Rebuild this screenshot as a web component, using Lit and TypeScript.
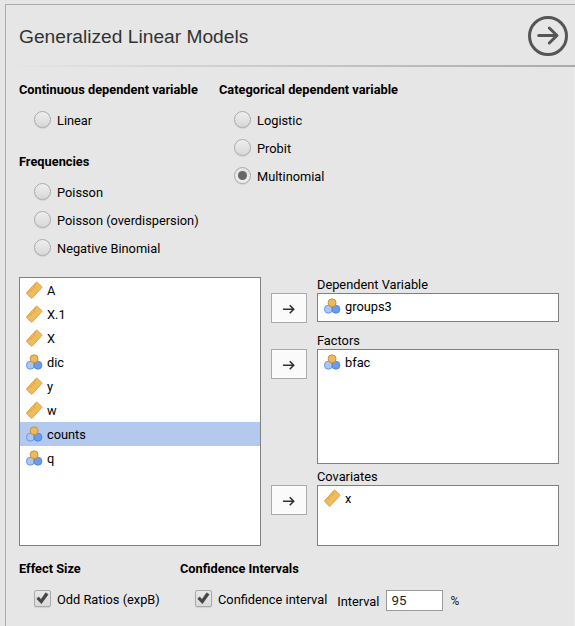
import { LitElement, html, css, svg, nothing } from "lit";
import { customElement, property, state } from "lit/decorators.js";
import { classMap } from "lit/directives/class-map.js";

type Kind = "continuous" | "nominal";
interface Variable {
  name: string;
  kind: Kind;
}

@customElement("var-icon")
class VarIcon extends LitElement {
  @property() kind: Kind = "continuous";

  static styles = css`
    :host { display: block; width: 18px; height: 18px; }
    svg { display: block; }
  `;

  render() {
    const ruler = svg`
      <g transform="translate(8.2 9.2) rotate(-48)">
        <rect x="-7.8" y="-3.9" width="15.6" height="7.8" rx="0.7" fill="#efbb5c" stroke="#e3a640" stroke-width="0.9"/>
        <path d="M-5.2 -4v1.8M-2.6 -4v2.8M0 -4v1.8M2.6 -4v2.8M5.2 -4v1.8" stroke="#c8872a" stroke-width="0.7" fill="none"/>
      </g>`;
    const circles = svg`
      <circle cx="4.4" cy="12.2" r="4" fill="#a9c6f5" stroke="#5e92e4" stroke-width="0.9"/>
      <circle cx="11.9" cy="12.2" r="4" fill="#699bee" stroke="#4a83de" stroke-width="0.9"/>
      <circle cx="8.1" cy="5.8" r="4" fill="#edb95b" stroke="#c8913a" stroke-width="1"/>`;
    return html`<svg width="18" height="18" viewBox="0 0 18 18">
      ${this.kind === "continuous" ? ruler : circles}
    </svg>`;
  }
}

@customElement("choice-control")
class ChoiceControl extends LitElement {
  @property() type: "radio" | "check" = "radio";
  @property() label = "";
  @property({ type: Boolean }) checked = false;

  static styles = css`
    :host { display: flex; align-items: flex-start; box-sizing: border-box; height: 28px; padding: 5px 0 0 15px; }
    .mark {
      box-sizing: border-box; width: 17px; height: 17px; flex: none;
      display: grid; place-items: center; border: 1px solid #aaa;
      background: linear-gradient(#eee, #d8d8d8);
      box-shadow: 0 1px 1px rgba(0, 0, 0, 0.09);
    }
    .radio { border-radius: 50%; }
    .radio.on { background: linear-gradient(#e2e2e2, #eee); }
    .check { border-radius: 2px; background: linear-gradient(#e8e8e8, #dadada); }
    .check svg { overflow: visible; display: block; }
    .dot { width: 9px; height: 9px; border-radius: 50%; background: #666; }
    .text { margin-left: 6px; line-height: 15px; padding-top: 2px; white-space: nowrap; }
  `;

  render() {
    const mark = this.type === "radio"
      ? html`<span class="dot"></span>`
      : html`<svg width="15" height="15" viewBox="0 0 15 15">
          <path d="M1.7 7.7L3.7 5.9L6 8.5L10.7 1.8L13.1 3.4L6.4 12.7Z" fill="#444" stroke="#444" stroke-width="0.6" stroke-linejoin="round"/>
        </svg>`;
    return html`
      <span class=${classMap({ mark: true, [this.type]: true, on: this.checked })}>${this.checked ? mark : nothing}</span>
      <span class="text">${this.label}</span>`;
  }
}

@customElement("variable-list")
class VariableList extends LitElement {
  @property({ attribute: false }) items: Variable[] = [];
  @property() selected = "";

  static styles = css`
    :host { display: block; box-sizing: border-box; background: #fff; border: 1px solid #808080; overflow: hidden; }
    .item { display: flex; height: 24px; padding: 3px 0 0 6px; box-sizing: border-box; }
    .item.selected { background: #b3caee; }
    .name { margin-left: 3px; line-height: 19px; }
  `;

  render() {
    return this.items.map(
      (v) => html`<div class=${classMap({ item: true, selected: v.name === this.selected })}>
        <var-icon .kind=${v.kind}></var-icon><span class="name">${v.name}</span>
      </div>`
    );
  }
}

@customElement("app-root")
class AppRoot extends LitElement {
  @state() private model = "Multinomial";

  private supply: Variable[] = [
    { name: "A", kind: "continuous" },
    { name: "X.1", kind: "continuous" },
    { name: "X", kind: "continuous" },
    { name: "dic", kind: "nominal" },
    { name: "y", kind: "continuous" },
    { name: "w", kind: "continuous" },
    { name: "counts", kind: "nominal" },
    { name: "q", kind: "nominal" },
  ];

  static styles = css`
    :host {
      display: block; box-sizing: border-box; height: 626px; padding: 4px 0 0 5px; overflow: hidden;
      background: #e6e6e6; color: #000; font: 12.8px Roboto, "Liberation Sans", sans-serif;
    }
    .panel { box-sizing: border-box; height: 622px; border: solid #aaa; border-width: 1px 0 0 1px; }
    .header { display: flex; align-items: center; justify-content: space-between; height: 60px; padding: 0 7px 0 13px; }
    .title { margin: 0; font: 19.2px "Liberation Sans", Arial, sans-serif; color: #333; padding-top: 3px; }
    .go { display: block; margin-top: 2px; }
    .rule { height: 2px; background: linear-gradient(to right, #e6e6e6, #aaa); }
    .body { box-sizing: border-box; height: 559px; padding: 14px 0 0 13px; border-right: 1px solid #f0f0f0; }
    .models { display: grid; grid-template-columns: 200px 1fr; height: 196px; }
    .heading { height: 18px; line-height: 18px; font-weight: 700; margin-bottom: 7px; white-space: nowrap; }
    .spaced { margin-top: 19px; }
    .assign { display: grid; grid-template-columns: 242px 36px 242px; column-gap: 10px; height: 269px; }
    .arrows { display: grid; grid-template-rows: 56px 136px 30px; padding-top: 16px; }
    .arrow { box-sizing: border-box; width: 36px; height: 30px; border: 1px solid #aaa; background: #fafafa; display: grid; place-items: center; }
    .targets { display: grid; grid-template-rows: 16px 29px 27px 115px 21px 61px; }
    .label { align-self: end; line-height: 16px; height: 16px; }
    .options { display: grid; grid-template-columns: 161px 1fr; margin-top: 14px; }
    .line { display: flex; }
    .interval { margin: 9px 7px 0 10px; line-height: 15px; }
    .value { box-sizing: border-box; width: 57px; height: 21px; margin-top: 5px; padding: 0 4px; border: 1px solid #999; background: #fff; font: 13.33px/19px Roboto, sans-serif; color: #222; }
    .percent { margin: 9px 0 0 7px; line-height: 15px; font-size: 12px; color: #222; }
  `;

  private radio(label: string) {
    return html`<choice-control type="radio" .label=${label} .checked=${this.model === label}
      @click=${() => (this.model = label)}></choice-control>`;
  }

  private arrow() {
    return html`<div class="arrow"><svg width="14" height="12" viewBox="0 0 14 12" fill="none" stroke="#333" stroke-width="1.6">
      <path d="M1 7.2H11.6M7.7 3.2L11.7 7.2L7.7 11.2"/></svg></div>`;
  }

  render() {
    return html`<div class="panel">
      <div class="header">
        <h1 class="title">Generalized Linear Models</h1>
        <svg class="go" width="40" height="40" viewBox="0 0 40 40" fill="none" stroke="#555" stroke-width="3" stroke-linecap="round">
          <circle cx="20" cy="20" r="18.5"/>
          <path d="M10.7 19.5H28.5M21.3 12L29 19.5L21.3 27" stroke-linejoin="round"/>
        </svg>
      </div>
      <div class="rule"></div>
      <div class="body">
        <div class="models">
          <div>
            <div class="heading">Continuous dependent variable</div>
            ${this.radio("Linear")}
            <div class="heading spaced">Frequencies</div>
            ${["Poisson", "Poisson (overdispersion)", "Negative Binomial"].map((l) => this.radio(l))}
          </div>
          <div>
            <div class="heading">Categorical dependent variable</div>
            ${["Logistic", "Probit", "Multinomial"].map((l) => this.radio(l))}
          </div>
        </div>
        <div class="assign">
          <variable-list .items=${this.supply} selected="counts"></variable-list>
          <div class="arrows">${this.arrow()}${this.arrow()}${this.arrow()}</div>
          <div class="targets">
            <div class="label">Dependent Variable</div>
            <variable-list .items=${[{ name: "groups3", kind: "nominal" }]}></variable-list>
            <div class="label">Factors</div>
            <variable-list .items=${[{ name: "bfac", kind: "nominal" }]}></variable-list>
            <div class="label">Covariates</div>
            <variable-list .items=${[{ name: "x", kind: "continuous" }]}></variable-list>
          </div>
        </div>
        <div class="options">
          <div>
            <div class="heading">Effect Size</div>
            <choice-control type="check" label="Odd Ratios (expB)" checked></choice-control>
          </div>
          <div>
            <div class="heading">Confidence Intervals</div>
            <div class="line">
              <choice-control type="check" label="Confidence interval" checked></choice-control>
              <span class="interval">Interval</span>
              <input class="value" .value=${"95"} />
              <span class="percent">%</span>
            </div>
          </div>
        </div>
      </div>
    </div>`;
  }
}
